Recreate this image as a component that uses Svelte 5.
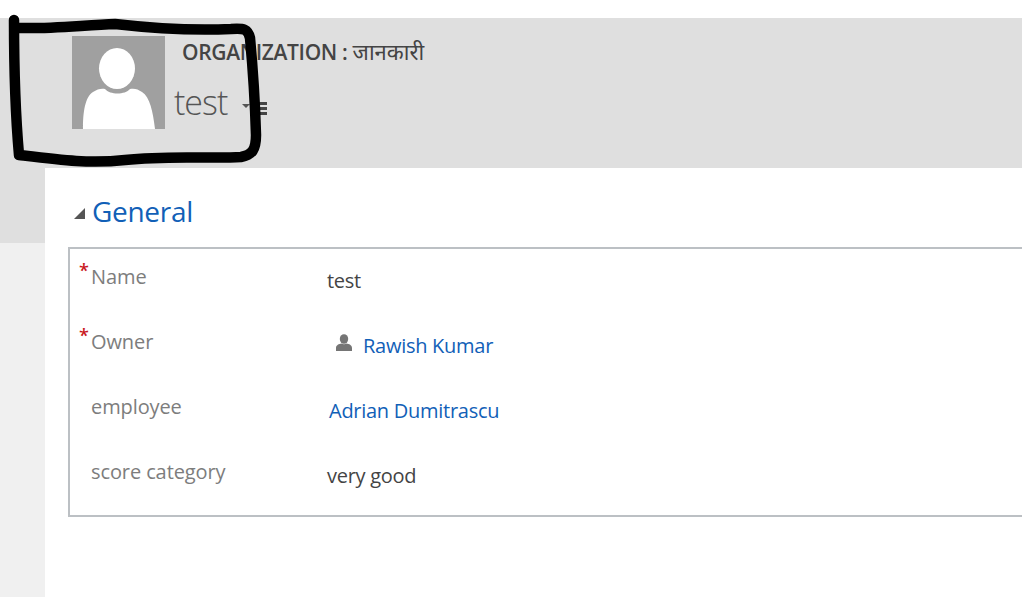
<script>
  const rows = [
    { label: "Name", required: true, value: "test" },
    { label: "Owner", required: true, value: "Rawish Kumar", link: true, user: true },
    { label: "employee", value: "Adrian Dumitrascu", link: true },
    { label: "score category", value: "very good" }
  ];
</script>

<div class="page">
  <header class="header">
    <div class="avatar">
      <svg viewBox="0 0 93 93" width="93" height="93">
        <rect width="93" height="93" fill="#a0a0a0" />
        <ellipse cx="45" cy="32.5" rx="18" ry="20.5" fill="#fff" />
        <path d="M11 93 C11 76 13 61 21 56 C25 53 30 52 33 53 C38 59 53 59 58 53 C62 52 66 53 70 56 C78 61 81 76 83 93 Z" fill="#fff" />
      </svg>
    </div>
    <div class="titles">
      <div class="entity">ORGANIZATION : <span class="hindi">जानकारी</span></div>
      <div class="record">
        <span class="name">test</span>
        <span class="caret"></span>
        <span class="lines"><i></i><i></i><i></i></span>
      </div>
    </div>
  </header>

  <div class="body">
    <div class="rail"><div class="rail-top"></div></div>
    <main class="main">
      <h2 class="section-title"><span class="tri"></span>General</h2>
      <div class="box">
        {#each rows as row}
          <div class="row">
            <div class="label">
              {#if row.required}<span class="req">*</span>{/if}
              {row.label}
            </div>
            <div class="value" class:link={row.link} class:has-user={row.user}>
              {#if row.user}
                <svg class="user" viewBox="0 0 16 18" width="16" height="18">
                  <ellipse cx="8" cy="5" rx="4.2" ry="4.8" fill="#757575" />
                  <path d="M0 17 V14 C0 11 3 10 5.5 9.5 C7 10.5 9 10.5 10.5 9.5 C13 10 16 11 16 14 V17 Z" fill="#757575" />
                </svg>
              {/if}
              {row.value}
            </div>
          </div>
        {/each}
      </div>
    </main>
  </div>

  <svg class="scribble" viewBox="0 0 270 175" width="270" height="175">
    <path d="M14 20 C14 50 15 110 19 155 C60 160 90 164 125 160 C170 155 210 159 241 157 C252 155 256 150 256 135 C255 100 253 70 250 38 C248 29 244 28 231 29 C190 31 150 28 115 24 C85 25 50 29 20 28" fill="none" stroke="#000" stroke-width="10.5" stroke-linecap="round" stroke-linejoin="round" />
  </svg>
</div>

<style>
  :global(body) {
    margin: 0;
    background: #fff;
  }

  .page {
    position: relative;
    width: 1022px;
    height: 597px;
    overflow: hidden;
    padding-top: 18px;
    box-sizing: border-box;
    font-family: "Open Sans", "Noto Sans", sans-serif;
  }

  .header {
    display: flex;
    height: 150px;
    background: #dfdfdf;
    padding: 18px 0 0 72px;
    box-sizing: border-box;
  }

  .avatar {
    width: 93px;
    height: 93px;
  }

  .avatar svg {
    display: block;
  }

  .titles {
    margin-left: 9px;
  }

  .entity {
    margin: 3px 0 0 8px;
    font-size: 21px;
    line-height: 26px;
    font-weight: 600;
    letter-spacing: -0.35px;
    color: #444;
    white-space: nowrap;
  }

  .hindi {
    font-size: 22px;
    font-weight: 400;
    letter-spacing: 0;
    font-family: "Noto Sans Devanagari", "Noto Sans", sans-serif;
  }

  .record {
    display: flex;
    align-items: center;
    margin-top: 12px;
    color: #555;
  }

  .name {
    font-size: 34px;
    line-height: 44px;
    font-weight: 300;
    letter-spacing: -1px;
  }

  .caret {
    margin: 8px 0 0 15px;
    border-left: 4px solid transparent;
    border-right: 4px solid transparent;
    border-top: 4px solid #555;
  }

  .lines {
    display: flex;
    flex-direction: column;
    gap: 2px;
    margin: 12px 0 0 3px;
  }

  .lines i {
    display: block;
    width: 14px;
    height: 3px;
    background: #444;
  }

  .body {
    display: flex;
    height: 429px;
  }

  .rail {
    width: 45px;
    flex: none;
    background: #f0f0f0;
  }

  .rail-top {
    height: 75px;
    background: #dfdfdf;
  }

  .main {
    flex: 1;
    min-width: 0;
    padding-left: 23px;
  }

  .section-title {
    display: flex;
    align-items: center;
    margin: 0;
    height: 79px;
    box-sizing: border-box;
    padding: 6px 0 0 6px;
    font-size: 28px;
    font-weight: 400;
    letter-spacing: -0.3px;
    color: #1160b7;
  }

  .tri {
    width: 0;
    height: 0;
    margin: 6px 7px 0 0;
    border-left: 11px solid transparent;
    border-bottom: 11px solid #555;
  }

  .box {
    height: 270px;
    box-sizing: border-box;
    border: 2px solid #bcc0c4;
    border-right: none;
    padding-top: 1px;
  }

  .row {
    display: flex;
    height: 65px;
  }

  .label {
    position: relative;
    width: 257px;
    flex: none;
    padding: 14px 0 0 21px;
    box-sizing: border-box;
    font-size: 20px;
    line-height: 26px;
    letter-spacing: -0.1px;
    color: #7d7d7d;
  }

  .req {
    position: absolute;
    left: 9px;
    top: 10px;
    font-size: 18px;
    line-height: 20px;
    font-weight: 600;
    color: #c9191e;
  }

  .value {
    padding-top: 18px;
    font-size: 20px;
    line-height: 26px;
    letter-spacing: -0.27px;
    color: #444;
  }

  .link {
    color: #1160b7;
    padding-left: 2px;
  }

  .has-user {
    display: flex;
    align-items: flex-start;
    gap: 11px;
    padding-left: 9px;
  }

  .user {
    margin-top: 1px;
  }

  .scribble {
    position: absolute;
    left: 0;
    top: 0;
    pointer-events: none;
  }
</style>
